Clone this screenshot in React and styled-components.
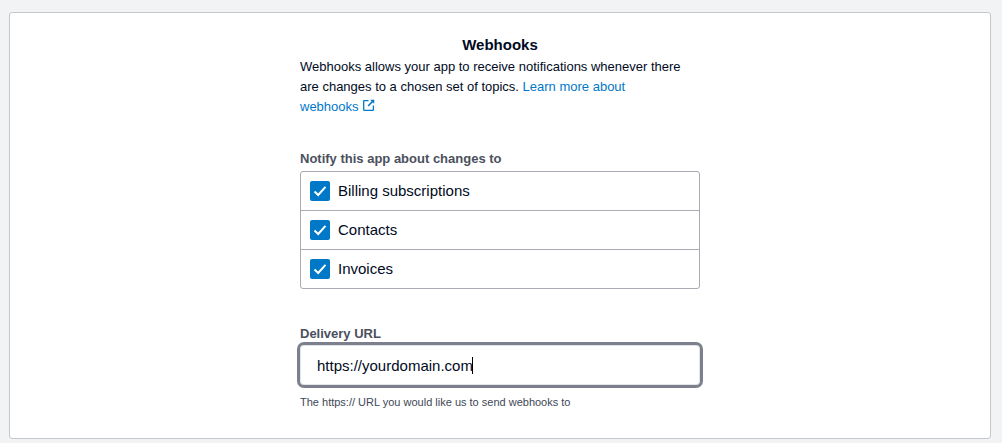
import React from "react";
import styled, { createGlobalStyle } from "styled-components";

const Global = createGlobalStyle`
  html, body { margin: 0; padding: 0; background: #f1f3f5; }
  body { font-family: "Liberation Sans", Arial, sans-serif; color: #000; }
`;

const Page = styled.div`
  width: 1002px;
  height: 443px;
  box-sizing: border-box;
  padding: 12px 11px 4px 9px;
  overflow: hidden;
`;

const Card = styled.main`
  height: 427px;
  box-sizing: border-box;
  background: #fff;
  border: 1px solid #c4c7cc;
  border-radius: 3px;
  display: flex;
  flex-direction: column;
  align-items: center;
  padding-top: 22px;
`;

const Column = styled.div`
  width: 400px;
  display: flex;
  flex-direction: column;
`;

const Title = styled.h2`
  margin: 0;
  font-size: 15px;
  font-weight: 700;
  line-height: 20px;
  text-align: center;
  color: #000a1e;
`;

const Intro = styled.p`
  margin: 2px 0 0;
  font-size: 13px;
  line-height: 20px;
  color: #000a1e;
`;

const Link = styled.a`
  color: #0078c8;
  text-decoration: none;
`;

const NoWrap = styled.span`
  white-space: nowrap;
`;

const ExternalIcon = styled.svg`
  width: 12px;
  height: 12px;
  margin-left: 4px;
  vertical-align: 0;
`;

const FieldLabel = styled.div`
  font-size: 13px;
  font-weight: 700;
  line-height: 16px;
  color: #4b505d;
  margin-top: ${(p) => p.$top}px;
`;

const OptionList = styled.div`
  margin-top: 4px;
  border: 1px solid #a9acb3;
  border-radius: 3px;
  display: flex;
  flex-direction: column;
`;

const OptionRow = styled.div`
  height: 38px;
  display: flex;
  align-items: center;
  gap: 8px;
  padding-left: 9px;
  font-size: 15px;
  color: #000a1e;
  & + & {
    border-top: 1px solid #a9acb3;
  }
`;

const OptionText = styled.span`
  padding-bottom: 2px;
`;

const CheckBox = styled.span`
  width: 20px;
  height: 20px;
  border-radius: 2px;
  background: #0078c8;
  display: flex;
  align-items: center;
  justify-content: center;
`;

const UrlBox = styled.div`
  margin: 0 -3px;
  height: 46px;
  box-sizing: border-box;
  border: 3px solid #7b808c;
  border-radius: 7px;
  background: #fff;
  box-shadow: inset 0 0 0 1px #e3e4e7;
  display: flex;
  align-items: center;
  padding-left: 17px;
  font-size: 15px;
  color: #000a1e;
`;

const Caret = styled.span`
  display: inline-block;
  width: 1px;
  height: 17px;
  background: #000;
  margin-left: -1px;
`;

const Hint = styled.div`
  margin-top: 7px;
  font-size: 11px;
  line-height: 14px;
  color: #404756;
`;

const options = ["Billing subscriptions", "Contacts", "Invoices"];

export default function App() {
  return (
    <>
      <Global />
      <Page>
        <Card>
          <Column>
            <Title>Webhooks</Title>
            <Intro>
              Webhooks allows your app to receive notifications whenever there
              are changes to a chosen set of topics.{" "}
              <Link href="#">
                Learn more about{" "}
                <NoWrap>
                  webhooks
                  <ExternalIcon viewBox="0 0 13 13" fill="none" stroke="#0078c8">
                    <path d="M6 1.75H1.25a.5.5 0 0 0-.5.5v9.5a.5.5 0 0 0 .5.5h9.5a.5.5 0 0 0 .5-.5V7" strokeWidth="1.4" />
                    <path d="M5.5 7.5 11.5 1.5" strokeWidth="1.6" />
                    <path d="M7.8 .8h4.4v4.4z" fill="#0078c8" strokeWidth="0" />
                  </ExternalIcon>
                </NoWrap>
              </Link>
            </Intro>
            <FieldLabel $top={34}>Notify this app about changes to</FieldLabel>
            <OptionList>
              {options.map((o) => (
                <OptionRow key={o}>
                  <CheckBox>
                    <svg width="14" height="12" viewBox="0 0 14 12" fill="none">
                      <path d="M1.5 6.5 5.2 10 12.5 1.8" stroke="#fff" strokeWidth="2" />
                    </svg>
                  </CheckBox>
                  <OptionText>{o}</OptionText>
                </OptionRow>
              ))}
            </OptionList>
            <FieldLabel $top={37}>Delivery URL</FieldLabel>
            <UrlBox>
              https://yourdomain.com
              <Caret />
            </UrlBox>
            <Hint>The https:// URL you would like us to send webhooks to</Hint>
          </Column>
        </Card>
      </Page>
    </>
  );
}
